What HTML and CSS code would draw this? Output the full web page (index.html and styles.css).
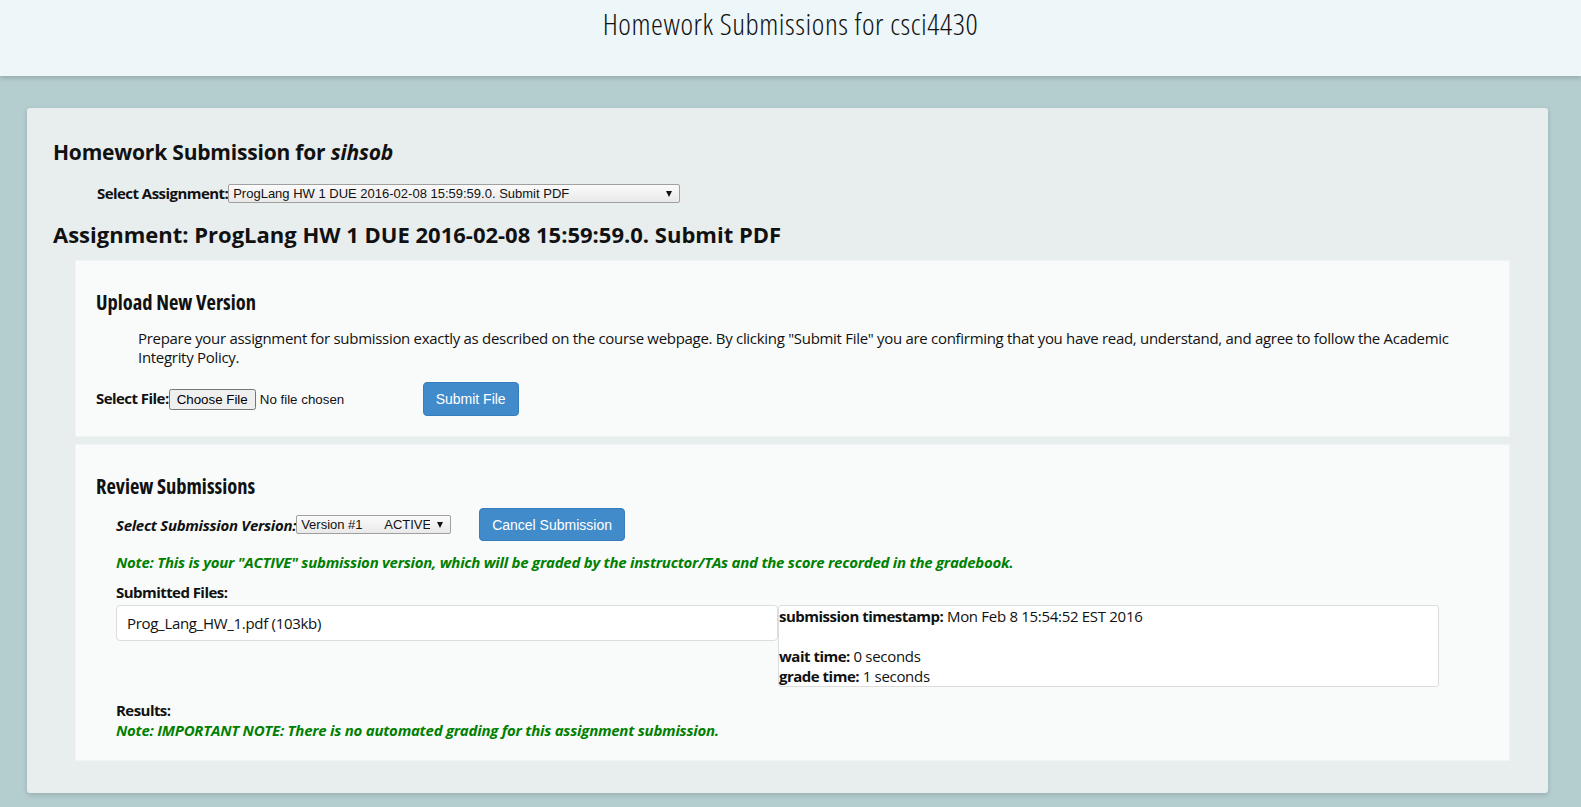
FILE: index.html
```html
<!DOCTYPE html>
<html>
<head>
<meta charset="utf-8">
<title>Homework Submissions for csci4430</title>
<link rel="stylesheet" href="styles.css">
</head>
<body>
<header class="topbar">
  <h1 class="site-title">Homework Submissions for csci4430</h1>
</header>
<main class="panel">
  <h2 class="page-title">Homework Submission for <em>sihsob</em></h2>
  <div class="assign-row">
    <label class="lbl">Select Assignment:</label>
    <span class="sel-wrap">
      <select class="sel sel-assign">
        <option>ProgLang HW 1 DUE 2016-02-08 15:59:59.0. Submit PDF</option>
      </select>
    </span>
  </div>
  <h2 class="page-title assign-title">Assignment: ProgLang HW 1 DUE 2016-02-08 15:59:59.0. Submit PDF</h2>

  <section class="box upload">
    <h3 class="box-title">Upload New Version</h3>
    <p class="intro">Prepare your assignment for submission exactly as described on the course webpage. By clicking "Submit File" you are confirming that you have read, understand, and agree to follow the Academic Integrity Policy.</p>
    <div class="file-row">
      <label class="lbl file-lbl">Select File:</label>
      <input class="file" type="file">
      <button class="btn btn-submit">Submit File</button>
    </div>
  </section>

  <section class="box review">
    <h3 class="box-title">Review Submissions</h3>
    <div class="version-row">
      <label class="lbl lbl-it">Select Submission Version:</label>
      <span class="sel-wrap">
        <select class="sel sel-version">
          <option>Version #1&nbsp;&nbsp;&nbsp;&nbsp;&nbsp;&nbsp;ACTIVE</option>
        </select>
      </span>
      <button class="btn btn-cancel">Cancel Submission</button>
    </div>
    <p class="note">Note: This is your "ACTIVE" submission version, which will be graded by the instructor/TAs and the score recorded in the gradebook.</p>
    <p class="lbl sub-lbl">Submitted Files:</p>
    <div class="files-grid">
      <div class="files-box">Prog_Lang_HW_1.pdf (103kb)</div>
      <div class="info-box">
        <div><b>submission timestamp:</b> Mon Feb 8 15:54:52 EST 2016</div>
        <div class="blank"></div>
        <div><b>wait time:</b> 0 seconds</div>
        <div><b>grade time:</b> 1 seconds</div>
      </div>
    </div>
    <p class="lbl res-lbl">Results:</p>
    <p class="note">Note: IMPORTANT NOTE: There is no automated grading for this assignment submission.</p>
  </section>
</main>
</body>
</html>
```
FILE: styles.css
```css
html, body {
  margin: 0;
  padding: 0;
}
body {
  background: #b4cdcf;
  font-family: "Open Sans", "Noto Sans", sans-serif;
  font-size: 15px;
  letter-spacing: -0.3px;
  color: #111;
  min-height: 807px;
}
b {
  letter-spacing: -0.5px;
}
.topbar {
  height: 76px;
  background: #edf6f8;
  box-shadow: 0 2px 5px rgba(0, 0, 0, 0.18);
  position: relative;
}
.site-title {
  margin: 0;
  padding-top: 4px;
  text-align: center;
  font-family: "Open Sans", sans-serif;
  font-stretch: 75%;
  font-weight: 300;
  font-size: 30px;
  letter-spacing: 0.55px;
  line-height: 40px;
  color: #111;
}
.panel {
  display: block;
  margin: 32px 33px 15px 27px;
  padding: 29px 38px 32px 26px;
  background: #e8eded;
  border-radius: 3px;
  box-shadow: 0 2px 5px rgba(0, 0, 0, 0.15);
}
.page-title {
  margin: 0;
  font-size: 21px;
  letter-spacing: -0.2px;
  line-height: 30px;
  font-weight: 700;
  color: #111;
}
.page-title em {
  font-style: italic;
}
.assign-row {
  display: flex;
  align-items: center;
  margin: 17px 0 0 44px;
  height: 18px;
}
.lbl {
  font-weight: 700;
  font-size: 15px;
  letter-spacing: -0.55px;
  line-height: 20px;
}
.lbl-it {
  font-style: italic;
  letter-spacing: -0.3px;
}
.file-lbl {
  margin-bottom: 3px;
}
.sel-wrap {
  position: relative;
  display: inline-block;
  height: 19px;
}
.sel-wrap::after {
  content: "";
  position: absolute;
  right: 8px;
  top: 7px;
  border-left: 3.5px solid transparent;
  border-right: 3.5px solid transparent;
  border-top: 6px solid #111;
  pointer-events: none;
}
.sel {
  appearance: none;
  -webkit-appearance: none;
  display: block;
  box-sizing: border-box;
  font-family: "Liberation Sans", Arial, sans-serif;
  font-size: 13px;
  letter-spacing: 0;
  height: 19px;
  line-height: 17px;
  padding: 0 20px 0 4px;
  color: #111;
  background: linear-gradient(#fbfbfb, #e9e9e9);
  border: 1px solid #a0a0a0;
  border-radius: 2px;
}
.sel-assign {
  width: 452px;
}
.sel-version {
  width: 155px;
}
.assign-title {
  margin-top: 17px;
  font-size: 22px;
  letter-spacing: 0;
}
.box {
  margin-left: 22px;
  padding: 29px 20px 20px 20px;
  background: #f9fbfb;
  border: 1px solid #f1f4f4;
}
.upload {
  margin-top: 11px;
}
.review {
  margin-top: 7px;
}
.box-title {
  margin: 0;
  font-size: 20.5px;
  font-stretch: 75%;
  letter-spacing: 0;
  line-height: 24px;
  font-weight: 700;
}
.intro {
  margin: 15px 0 0 42px;
  line-height: 19px;
}
.file-row {
  display: flex;
  align-items: center;
  margin-top: 15px;
  height: 34px;
}
.file {
  font-family: "Liberation Sans", Arial, sans-serif;
  font-size: 13.33px;
  letter-spacing: 0;
  width: 250px;
  color: #111;
}
.btn {
  font-family: "Liberation Sans", Arial, sans-serif;
  font-size: 14px;
  letter-spacing: 0;
  color: #fff;
  background: #428bca;
  border: 1px solid #357ebd;
  border-radius: 4px;
  padding: 0 12px;
}
.btn-submit {
  height: 34px;
  margin-left: 4px;
}
.version-row {
  display: flex;
  align-items: center;
  margin: 10px 0 0 20px;
  height: 33px;
}
.btn-cancel {
  height: 33px;
  margin-left: 28px;
}
.note {
  margin: 11px 0 0 20px;
  color: #008000;
  font-weight: 700;
  font-style: italic;
  letter-spacing: -0.25px;
  line-height: 20px;
}
.sub-lbl {
  margin: 10px 0 0 20px;
}
.files-grid {
  display: grid;
  grid-template-columns: 662px 661px;
  align-items: start;
  margin: 3px 0 0 20px;
}
.files-box {
  height: 34px;
  line-height: 34px;
  padding: 0 10px;
  background: #fff;
  border: 1px solid #ddd;
  border-radius: 4px;
}
.info-box {
  background: #fff;
  border: 1px solid #ddd;
  border-radius: 3px;
  line-height: 20px;
}
.blank {
  height: 20px;
}
.res-lbl {
  margin: 13px 0 0 20px;
}
.res-lbl + .note {
  margin-top: 0;
}
```
